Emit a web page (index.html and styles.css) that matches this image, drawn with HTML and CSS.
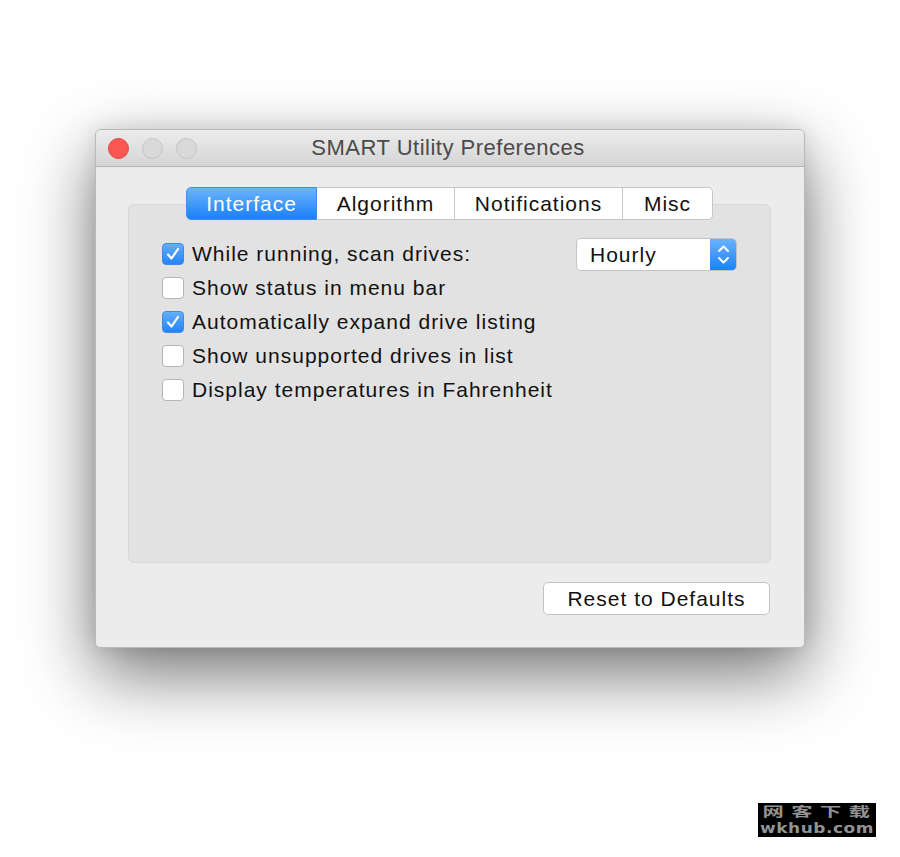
FILE: index.html
```html
<!DOCTYPE html>
<html lang="en">
<head>
    <meta charset="UTF-8">
    <title>SMART Utility Preferences</title>
    <link rel="stylesheet" href="styles.css">
</head>
<body>

    <div class="janela">
        <div class="titulo">
            <div class="semaforo">
                <span class="luz fechar"></span>
                <span class="luz"></span>
                <span class="luz"></span>
            </div>
            <div class="titulo-texto">SMART Utility Preferences</div>
        </div>

        <div class="conteudo">
            <div class="abas">
                <div class="aba ativa">Interface</div>
                <div class="aba">Algorithm</div>
                <div class="aba">Notifications</div>
                <div class="aba">Misc</div>
            </div>

            <div class="grupo">
                <div class="linha">
                    <label class="opcao">
                        <span class="caixa marcada">
                            <svg viewBox="0 0 22 22" width="22" height="22"><path d="M6 11.5 L9.5 15.5 L16 6" fill="none" stroke="#fff" stroke-width="2.2" stroke-linecap="round" stroke-linejoin="round"/></svg>
                        </span>
                        While running, scan drives:
                    </label>
                    <div class="popup">
                        <span class="popup-texto">Hourly</span>
                        <span class="popup-seta">
                            <svg viewBox="0 0 27 33" width="27" height="33"><path d="M9 13 L13.5 8.5 L18 13 M9 20 L13.5 24.5 L18 20" fill="none" stroke="#fff" stroke-width="2" stroke-linecap="round" stroke-linejoin="round"/></svg>
                        </span>
                    </div>
                </div>
                <label class="opcao"><span class="caixa"></span>Show status in menu bar</label>
                <label class="opcao">
                    <span class="caixa marcada">
                        <svg viewBox="0 0 22 22" width="22" height="22"><path d="M6 11.5 L9.5 15.5 L16 6" fill="none" stroke="#fff" stroke-width="2.2" stroke-linecap="round" stroke-linejoin="round"/></svg>
                    </span>
                    Automatically expand drive listing
                </label>
                <label class="opcao"><span class="caixa"></span>Show unsupported drives in list</label>
                <label class="opcao"><span class="caixa"></span>Display temperatures in Fahrenheit</label>
            </div>

            <div class="rodape">
                <button class="botao">Reset to Defaults</button>
            </div>
        </div>
    </div>

    <div class="marca">
        <div class="marca-cn">网客下载</div>
        <div class="marca-en">wkhub.com</div>
    </div>

</body>
</html>
```

FILE: styles.css
```css
body {
    background: #fff;
    font-family: "Liberation Sans", Arial, sans-serif;
    margin: 0;
    height: 857px;
    padding-top: 129px;
    box-sizing: border-box;
    color: #111;
    letter-spacing: 1px;
}

.janela {
    margin-left: 95px;
    width: 710px;
    height: 519px;
    box-sizing: border-box;
    background: #ececec;
    border: 1px solid #b9b9b9;
    border-radius: 6px 6px 5px 5px;
    box-shadow: 0 26px 70px rgba(0, 0, 0, 0.55), 0 0 20px rgba(0, 0, 0, 0.1);
    overflow: hidden;
}

.titulo {
    position: relative;
    height: 36px;
    background: linear-gradient(#ececec, #d5d5d5);
    border-bottom: 1px solid #b3b3b3;
    display: flex;
    align-items: center;
    justify-content: center;
}

.semaforo {
    position: absolute;
    left: 12px;
    top: 8px;
    display: flex;
    gap: 13px;
}

.luz {
    width: 19px;
    height: 19px;
    border-radius: 50%;
    background: #d9d9d9;
    border: 1px solid #c4c4c4;
}

.luz.fechar {
    background: #fc5753;
    border-color: #df4744;
}

.titulo-texto {
    font-size: 22px;
    color: #4a4a4a;
    letter-spacing: 0.5px;
    margin-left: -4px;
}

.conteudo {
    padding: 20px 33px 0 32px;
}

.abas {
    display: flex;
    justify-content: center;
    position: relative;
    z-index: 1;
    margin-bottom: -16px;
}

.aba {
    height: 33px;
    box-sizing: border-box;
    background: #fff;
    border: 1px solid #c6c6c6;
    border-left: none;
    font-size: 21px;
    line-height: 31px;
    text-align: center;
}

.aba:first-child {
    border-left: 1px solid #c6c6c6;
    border-radius: 5px 0 0 5px;
}

.aba:last-child {
    border-radius: 0 5px 5px 0;
}

.aba:nth-child(1) { width: 131px; }
.aba:nth-child(2) { width: 138px; }
.aba:nth-child(3) { width: 168px; }
.aba:nth-child(4) { width: 90px; }

.aba.ativa {
    background: linear-gradient(#6db4fb, #1a80fb);
    border-color: #3d8ef0;
    color: #fff;
}

.grupo {
    height: 359px;
    box-sizing: border-box;
    background: #e2e2e2;
    border: 1px solid #d8d8d8;
    border-radius: 6px;
    padding: 32px 33px 0 33px;
}

.linha {
    display: flex;
    justify-content: space-between;
    align-items: center;
    height: 34px;
}

.opcao {
    display: flex;
    align-items: center;
    height: 34px;
    font-size: 21px;
    gap: 8px;
    letter-spacing: 1px;
}

.caixa {
    width: 22px;
    height: 22px;
    box-sizing: border-box;
    background: #fff;
    border: 1px solid #b5b5b5;
    border-radius: 4px;
    display: flex;
}

.caixa.marcada {
    background: linear-gradient(#64aefb, #2484f8);
    border-color: #3a8ce8;
}

.caixa svg {
    margin: -1px;
}

.popup {
    width: 161px;
    height: 33px;
    box-sizing: border-box;
    display: flex;
    background: #fff;
    border: 1px solid #c3c3c3;
    border-radius: 5px;
    overflow: hidden;
}

.popup-texto {
    flex: 1;
    font-size: 21px;
    line-height: 31px;
    padding-left: 13px;
}

.popup-seta {
    width: 27px;
    background: linear-gradient(#6db4fb, #1a80fb);
    margin: -1px -1px -1px 0;
}

.rodape {
    display: flex;
    justify-content: flex-end;
    padding: 19px 1px 0 0;
}

.botao {
    width: 227px;
    height: 33px;
    background: #fff;
    border: 1px solid #c3c3c3;
    border-radius: 5px;
    font-family: "Liberation Sans", Arial, sans-serif;
    font-size: 21px;
    letter-spacing: 1px;
    color: #111;
    padding: 0;
}

/* marca d'agua do site no canto */
.marca {
    position: absolute;
    left: 758px;
    top: 803px;
    width: 118px;
    height: 34px;
    background: #000;
    color: #929292;
    font-weight: bold;
    text-align: center;
    letter-spacing: 0;
}

.marca-cn {
    font-family: "Noto Sans CJK SC", sans-serif;
    font-size: 17px;
    line-height: 22px;
    height: 22px;
    letter-spacing: 6px;
    margin: -3px -6px 0 0;
    transform: scale(1.25, 0.75);
}

.marca-en {
    font-family: "DejaVu Sans", sans-serif;
    font-size: 17px;
    line-height: 20px;
    height: 20px;
    letter-spacing: 0.5px;
    margin-top: -4px;
    transform: scaleY(0.85);
}
```
